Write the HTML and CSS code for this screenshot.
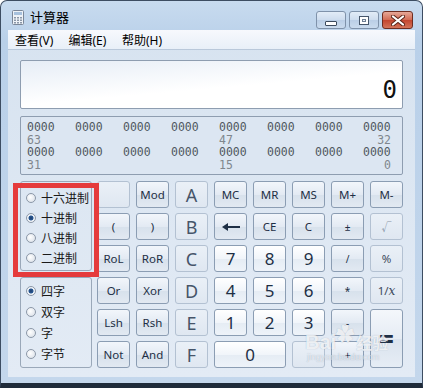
FILE: index.html
```html
<!DOCTYPE html>
<html lang="zh-CN">
<head>
    <meta charset="UTF-8">
    <title>计算器</title>
    <link rel="stylesheet" href="styles.css">
</head>
<body>
    <div class="window">
        <div class="titlebar">
            <svg class="app-icon" width="12" height="15" viewBox="0 0 12 15">
                <rect x="0.5" y="0.5" width="11" height="14" rx="1" fill="#eef2f7" stroke="#7b8798"/>
                <rect x="2" y="2" width="8" height="3" fill="#a7c1dd"/>
                <g fill="#8b97a8">
                    <rect x="2" y="7" width="2" height="1.5"/><rect x="5" y="7" width="2" height="1.5"/><rect x="8" y="7" width="2" height="1.5"/>
                    <rect x="2" y="9.5" width="2" height="1.5"/><rect x="5" y="9.5" width="2" height="1.5"/><rect x="8" y="9.5" width="2" height="1.5"/>
                    <rect x="2" y="12" width="2" height="1.5"/><rect x="5" y="12" width="2" height="1.5"/><rect x="8" y="12" width="2" height="1.5"/>
                </g>
            </svg>
            <span class="title">计算器</span>
            <div class="caption">
                <span class="cap cap-min"><i></i></span>
                <span class="cap cap-max"><i></i></span>
                <span class="cap cap-close">
                    <svg width="14" height="11" viewBox="0 0 14 11">
                        <path d="M2 1.5 L12 9.5 M12 1.5 L2 9.5" stroke="#5a2418" stroke-width="4" stroke-linecap="round"/>
                        <path d="M2 1.5 L12 9.5 M12 1.5 L2 9.5" stroke="#fff" stroke-width="2.2" stroke-linecap="round"/>
                    </svg>
                </span>
            </div>
        </div>

        <div class="client">
            <div class="menubar">
                <span>查看(V)</span>
                <span>编辑(E)</span>
                <span>帮助(H)</span>
            </div>

            <div class="content">
                <div class="display">0</div>

                <div class="bits">
                    <span>0000</span><span>0000</span><span>0000</span><span>0000</span><span>0000</span><span>0000</span><span>0000</span><span>0000</span>
                    <span class="pos">63</span><span></span><span></span><span></span><span class="pos">47</span><span></span><span></span><span class="pos end">32</span>
                    <span>0000</span><span>0000</span><span>0000</span><span>0000</span><span>0000</span><span>0000</span><span>0000</span><span>0000</span>
                    <span class="pos">31</span><span></span><span></span><span></span><span class="pos">15</span><span></span><span></span><span class="pos end">0</span>
                </div>

                <div class="pad">
                    <div class="radios">
                        <div class="group group-base">
                            <label class="opt"><span class="radio"></span>十六进制</label>
                            <label class="opt"><span class="radio checked"></span>十进制</label>
                            <label class="opt"><span class="radio"></span>八进制</label>
                            <label class="opt"><span class="radio"></span>二进制</label>
                            <div class="highlight"></div>
                        </div>
                        <div class="group group-word">
                            <label class="opt"><span class="radio checked"></span>四字</label>
                            <label class="opt"><span class="radio"></span>双字</label>
                            <label class="opt"><span class="radio"></span>字</label>
                            <label class="opt"><span class="radio"></span>字节</label>
                        </div>
                    </div>

                    <div class="keys">
                        <span class="key off"></span>
                        <span class="key">Mod</span>
                        <span class="key off big">A</span>
                        <span class="key">MC</span>
                        <span class="key">MR</span>
                        <span class="key">MS</span>
                        <span class="key">M+</span>
                        <span class="key">M-</span>

                        <span class="key">(</span>
                        <span class="key">)</span>
                        <span class="key off big">B</span>
                        <span class="key"><svg width="18" height="8" viewBox="0 0 18 8"><path d="M0 4 L6 0 L6 3 L18 3 L18 5 L6 5 L6 8 Z" fill="#1e2f45"/></svg></span>
                        <span class="key">CE</span>
                        <span class="key">C</span>
                        <span class="key small">±</span>
                        <span class="key off faint small">√</span>

                        <span class="key">RoL</span>
                        <span class="key">RoR</span>
                        <span class="key off big">C</span>
                        <span class="key num">7</span>
                        <span class="key num">8</span>
                        <span class="key num">9</span>
                        <span class="key small">/</span>
                        <span class="key off">%</span>

                        <span class="key">Or</span>
                        <span class="key">Xor</span>
                        <span class="key off big">D</span>
                        <span class="key num">4</span>
                        <span class="key num">5</span>
                        <span class="key num">6</span>
                        <span class="key small">*</span>
                        <span class="key off">1/<i class="ital">x</i></span>

                        <span class="key">Lsh</span>
                        <span class="key">Rsh</span>
                        <span class="key off big">E</span>
                        <span class="key num">1</span>
                        <span class="key num">2</span>
                        <span class="key num">3</span>
                        <span class="key small">-</span>
                        <span class="key equals">=</span>

                        <span class="key">Not</span>
                        <span class="key">And</span>
                        <span class="key off big">F</span>
                        <span class="key num zero">0</span>
                        <span class="key off faint"></span>
                        <span class="key small">+</span>
                    </div>
                </div>
            </div>
        </div>

        <div class="watermark">
            <span class="wm-logo">Bai<b>&#10047;</b></span><span class="wm-cn">经验</span>
            <span class="wm-url">jingyan.baidu.com</span>
        </div>
    </div>
</body>
</html>
```

FILE: styles.css
```css
body {
    margin: 0;
    background: #ffffff;
    font-family: "Noto Sans", "Noto Sans CJK SC", sans-serif;
}
.window {
    position: relative;
    width: 423px;
    height: 388px;
    box-sizing: border-box;
    border: 1px solid #3d4d62;
    border-bottom: 5px solid #1f2b3a;
    border-radius: 7px 7px 0 0;
    padding: 0 7px 6px;
    background: linear-gradient(#c8dbef, #b9d0e9 40px, #c4d7ec);
}

/* title bar */
.titlebar {
    height: 29px;
    display: flex;
    align-items: flex-start;
}
.app-icon {
    margin: 9px 0 0 4px;
}
.title {
    margin: 7px 0 0 6px;
    font-size: 13px;
    line-height: 18px;
    color: #000;
}
.caption {
    margin: 10px 2px 0 auto;
    display: flex;
    gap: 3px;
}
.cap {
    height: 18px;
    width: 30px;
    box-sizing: border-box;
    border: 1px solid #7f92aa;
    border-radius: 3px;
    display: flex;
    align-items: center;
    justify-content: center;
    background: linear-gradient(#e2ecf7, #cddcee 50%, #bacee6 50%, #cadbee);
}
.cap-min i {
    width: 12px;
    height: 5px;
    box-sizing: border-box;
    margin-top: 6px;
    border: 1px solid #3c4b5e;
    border-radius: 1px;
    background: #fff;
}
.cap-max i {
    width: 10px;
    height: 9px;
    box-sizing: border-box;
    border: 1px solid #46566b;
    background: #eef3f9;
    box-shadow: inset 0 0 0 2px #fff, inset 0 0 0 3px #6f7f94;
}
.cap-close {
    width: 31px;
    border-color: #6f2d21;
    background: linear-gradient(#e6a898, #d26a53 50%, #c3442e 50%, #d3735a);
}

/* client area */
.client {
    height: 347px;
    background: linear-gradient(#d7e3f0, #e3ebf5);
    display: flex;
    flex-direction: column;
}
.menubar {
    height: 20px;
    box-sizing: border-box;
    border-bottom: 1px solid #b9c8da;
    background: linear-gradient(#f7f9fd, #e8eff8);
    display: flex;
    align-items: center;
    padding-left: 7px;
    font-size: 12px;
    color: #000;
}
.menubar span {
    width: 53.5px;
}
.content {
    padding: 10px 12px 0;
}
.display {
    height: 49px;
    box-sizing: border-box;
    border: 1px solid #8e9db0;
    border-radius: 2px;
    background: linear-gradient(175deg, #e6edf6, #ffffff 55%);
    display: flex;
    justify-content: flex-end;
    align-items: flex-end;
    padding: 0 5px 6px;
    font-family: "DejaVu Sans Mono", monospace;
    font-variant-numeric: slashed-zero;
    font-size: 24px;
    line-height: 1;
    color: #111;
}
.bits {
    margin-top: 7px;
    height: 59px;
    box-sizing: border-box;
    border: 1px solid #8e9db0;
    border-radius: 2px;
    background: #dce6f2;
    padding: 4px 0 0 6px;
    display: grid;
    grid-template-columns: repeat(8, 28px);
    column-gap: 20px;
    grid-auto-rows: 12.7px;
    font-family: "DejaVu Sans Mono", monospace;
    font-variant-numeric: slashed-zero;
    font-size: 11.5px;
    line-height: 12.7px;
    color: #505860;
}
.bits .pos {
    color: #80868d;
}
.bits .end {
    justify-self: end;
}

/* keypad */
.pad {
    margin-top: 6px;
    display: flex;
    gap: 5px;
}
.radios {
    width: 72px;
    display: flex;
    flex-direction: column;
    gap: 6px;
}
.group {
    position: relative;
    box-sizing: border-box;
    border: 1px solid #9aa8b9;
    border-radius: 3px;
    padding-left: 5px;
    font-size: 12px;
    color: #1a1a1a;
}
.group-base {
    height: 90px;
    padding-top: 6px;
}
.group-word {
    height: 91px;
    padding-top: 2px;
}
.opt {
    display: flex;
    align-items: center;
    gap: 5px;
    height: 20px;
}
.group-word .opt {
    height: 21px;
}
.radio {
    width: 10px;
    height: 10px;
    box-sizing: border-box;
    border-radius: 50%;
    border: 1px solid #8c98a8;
    background: radial-gradient(circle at 40% 40%, #ffffff, #d5dce5);
}
.radio.checked {
    background: radial-gradient(circle, #1d3f6e 0, #2a5a96 2.2px, #e9eef4 2.8px, #ffffff);
}
.highlight {
    position: absolute;
    left: -8px;
    top: 1px;
    width: 86px;
    height: 94px;
    box-sizing: border-box;
    border: 5px solid #e53b3c;
}

.keys {
    display: grid;
    grid-template-columns: repeat(8, 33px);
    grid-auto-rows: 27px;
    gap: 5px 6px;
}
.key {
    box-sizing: border-box;
    border: 1px solid #8b9db3;
    border-radius: 3px;
    background: linear-gradient(#f2f6fb, #e3eaf3 50%, #d7e1ec 51%, #e2e9f2);
    display: flex;
    align-items: center;
    justify-content: center;
    font-size: 11.5px;
    color: #1e2f45;
}
.key.num {
    background: linear-gradient(#ffffff, #f1f5fa 50%, #e5ecf4 51%, #eef3f9);
    font-size: 17px;
    color: #1e2f45;
}
.key.off {
    border-color: #b3c1d2;
    background: linear-gradient(#eaf0f7, #dfe7f1);
    color: #3d4a5c;
}
.key.big {
    font-size: 18px;
    color: #46556a;
}
.key.small {
    font-size: 10px;
}
.key.faint {
    color: #8794a6;
}
.ital {
    font-family: "DejaVu Serif", serif;
    font-size: 12px;
}
.key.equals {
    grid-row: span 2;
    font-size: 26px;
    font-weight: 700;
    background: linear-gradient(#f4f7fb, #e5ecf4 50%, #dae3ee 51%, #e6edf5);
}
.key.zero {
    grid-column: span 2;
}

/* watermark */
.watermark {
    position: absolute;
    left: 284px;
    top: 327px;
    width: 112px;
    pointer-events: none;
    color: rgba(255, 255, 255, 0.8);
    text-shadow: 0 0 1px rgba(90, 110, 140, 0.45);
}
.wm-logo {
    font-family: "Liberation Sans", sans-serif;
    font-size: 20px;
    font-weight: 700;
    margin-left: 20px;
}
.wm-logo b {
    font-size: 18px;
    position: relative;
    top: -8px;
}
.wm-cn {
    font-size: 16px;
    font-weight: 700;
    margin-left: 2px;
}
.wm-url {
    display: block;
    margin: -2px 0 0 22px;
    font-family: "Liberation Sans", sans-serif;
    font-size: 9px;
    color: rgba(255, 255, 255, 0.6);
}
```
